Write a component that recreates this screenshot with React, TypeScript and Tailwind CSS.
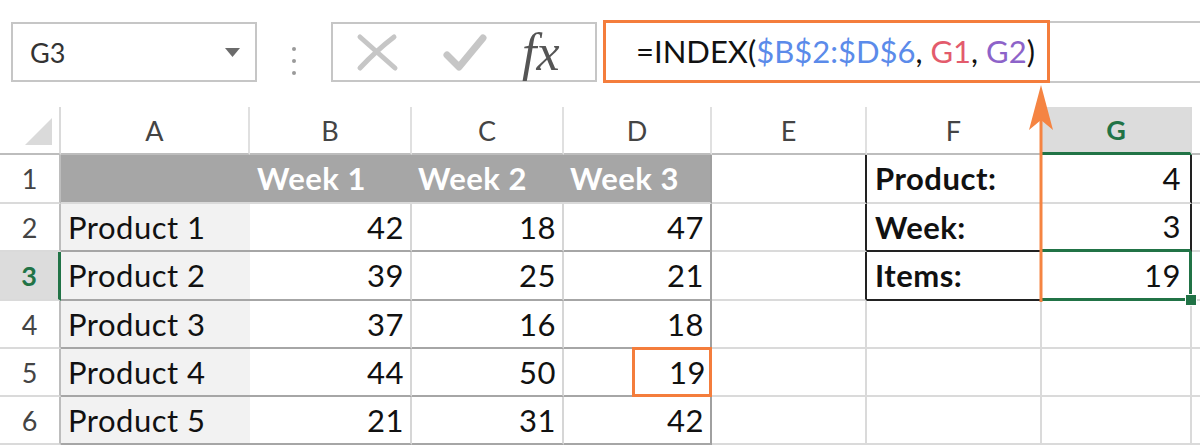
import React from "react"

const sans = "font-['Lato','Liberation_Sans',sans-serif]"

type CellProps = { className?: string; children?: React.ReactNode }

// one sheet cell; borders are drawn on right and bottom only
const Cell = ({ className = "", children }: CellProps) => (
  <div className={"relative flex min-w-0 items-center " + className}>{children}</div>
)

const products = [
  { name: "Product 1", b: "42", c: "18", d: "47" },
  { name: "Product 2", b: "39", c: "25", d: "21" },
  { name: "Product 3", b: "37", c: "16", d: "18" },
  { name: "Product 4", b: "44", c: "50", d: "19" },
  { name: "Product 5", b: "21", c: "31", d: "42" },
]

const lookup: Record<number, { label: string; value: string }> = {
  2: { label: "Week:", value: "3" },
  3: { label: "Items:", value: "19" },
}

const RowHeader = ({ n }: { n: number }) =>
  n === 3 ? (
    <Cell className="justify-center border-r-[3px] border-b-2 border-r-[#217346] border-b-[#dadada] bg-[#dcdcdc] text-[27px] font-bold tracking-normal text-[#217346]">
      3
    </Cell>
  ) : (
    <Cell className="justify-center border-r-2 border-b-2 border-r-[#bdbdbd] border-b-[#dadada] text-[27px] tracking-normal text-[#444]">
      {n}
    </Cell>
  )

export default function App() {
  return (
    <div className={"relative h-[448px] w-[1200px] overflow-hidden bg-white text-[#111] " + sans}>
      {/* formula bar */}
      <div className="flex h-[107px] items-start pt-[20px]">
        <div className="ml-[11px] mt-[2px] flex h-[60px] w-[246px] items-center justify-between border-2 border-[#c6c6c6] pl-[17px] pr-[15px]">
          <span className="text-[27px] leading-none text-[#333]">G3</span>
          <svg width="15" height="9" viewBox="0 0 15 9">
            <path d="M0 0h15L7.5 9z" fill="#6b6b6b" />
          </svg>
        </div>
        <div className="flex w-[74px] flex-col items-center gap-[8px] pt-[27px]">
          <span className="h-[4px] w-[4px] rounded-full bg-[#9a9a9a]" />
          <span className="h-[4px] w-[4px] rounded-full bg-[#9a9a9a]" />
          <span className="h-[4px] w-[4px] rounded-full bg-[#9a9a9a]" />
        </div>
        <div className="mt-[2px] flex h-[60px] w-[266px] items-center border-2 border-[#c6c6c6] pl-[22px]">
          <svg width="44" height="40" viewBox="0 0 44 40">
            <path d="M5 5 Q22 20 40 36 M39 5 Q22 18 5 36" stroke="#c6c6c6" strokeWidth="5" strokeLinecap="round" fill="none" />
          </svg>
          <svg className="ml-[43px]" width="46" height="40" viewBox="0 0 46 40">
            <path d="M5 23 L17 35 L41 6" stroke="#c6c6c6" strokeWidth="7" strokeLinecap="round" strokeLinejoin="round" fill="none" />
          </svg>
          <span className="ml-[34px] mt-[2px] font-['Liberation_Serif',serif] text-[52px] italic leading-none text-[#555]">fx</span>
        </div>
        <div className="ml-[6px] flex h-[63px] w-[447px] items-center border-[3px] border-[#f47d3c] pl-[30px] text-[31px] leading-none">
          <span>=INDEX(</span>
          <span className="text-[#5b8bea]">$B$2:$D$6</span>
          <span>,&nbsp;</span>
          <span className="text-[#e35b6c]">G1</span>
          <span>,&nbsp;</span>
          <span className="text-[#8d63c9]">G2</span>
          <span>)</span>
        </div>
        <div className="mt-[1px] h-[62px] flex-1 border-y-2 border-[#c8c8c8]" />
      </div>

      {/* sheet */}
      <div className="grid grid-cols-[61px_189px_162px_152px_148px_155px_175px_150px_1fr] grid-rows-[48px_49px_48px_49px_48px_48px_48px] text-[31px] leading-none tracking-[0.5px]">
        {/* column letters */}
        <Cell className="items-end justify-end border-r-2 border-b-2 border-r-[#dadada] border-b-[#bdbdbd] pr-[7px] pb-[8px]">
          <svg width="27" height="27" viewBox="0 0 27 27">
            <path d="M27 0V27H0z" fill="#dadada" />
          </svg>
        </Cell>
        {["A", "B", "C", "D", "E", "F"].map((l) => (
          <Cell key={l} className="justify-center border-r-2 border-b-2 border-r-[#e0e0e0] border-b-[#bdbdbd] text-[27px] tracking-normal text-[#444]">
            {l}
          </Cell>
        ))}
        <Cell className="justify-center border-r-2 border-b-[3px] border-r-[#dadada] border-b-[#217346] bg-[#dcdcdc] text-[27px] font-bold tracking-normal text-[#217346]">
          G
        </Cell>
        <Cell className="border-b-2 border-b-[#bdbdbd]" />

        {/* row 1 */}
        <RowHeader n={1} />
        <Cell className="border-b-2 border-b-[#dadada] bg-[#a6a6a6]" />
        <Cell className="border-b-2 border-b-[#dadada] bg-[#a6a6a6] pl-[7px] font-bold text-white">Week 1</Cell>
        <Cell className="border-b-2 border-b-[#dadada] bg-[#a6a6a6] pl-[6px] font-bold text-white">Week 2</Cell>
        <Cell className="border-r-2 border-b-2 border-r-[#a0a0a0] border-b-[#dadada] bg-[#a6a6a6] pl-[6px] font-bold text-white">
          Week 3
        </Cell>
        <Cell className="border-r-2 border-b-2 border-r-[#222] border-b-[#dadada]" />
        <Cell className="border-r-2 border-b-2 border-r-[#dadada] border-b-[#dadada] pl-[8px] font-bold">Product:</Cell>
        <Cell className="justify-end border-r-2 border-b-2 border-r-[#222] border-b-[#dadada] pr-[9px]">4</Cell>
        <Cell className="border-b-2 border-b-[#dadada]" />

        {/* rows 2-6 */}
        {products.map((p, i) => {
          const n = i + 2
          const extra = lookup[n]
          return (
            <React.Fragment key={n}>
              <RowHeader n={n} />
              <Cell className="border-b-2 border-b-[#a6a6a6] bg-[#f2f2f2] pl-[7px]">{p.name}</Cell>
              <Cell className="justify-end border-r-2 border-b-2 border-r-[#d6d6d6] border-b-[#a6a6a6] pr-[6px]">{p.b}</Cell>
              <Cell className="justify-end border-r-2 border-b-2 border-r-[#d6d6d6] border-b-[#a6a6a6] pr-[6px]">{p.c}</Cell>
              {n === 5 ? (
                <Cell className="justify-end border-r-2 border-b-2 border-r-[#a0a0a0] border-b-[#a6a6a6]">
                  <div className="absolute right-[-2px] top-[-2px] z-10 flex h-[50px] w-[80px] items-center justify-end border-[3px] border-[#f47d3c] pr-[3px]">
                    {p.d}
                  </div>
                </Cell>
              ) : (
                <Cell className="justify-end border-r-2 border-b-2 border-r-[#a0a0a0] border-b-[#a6a6a6] pr-[6px]">{p.d}</Cell>
              )}
              {extra ? (
                <>
                  <Cell className="border-r-2 border-b-2 border-r-[#222] border-b-[#dadada]" />
                  <Cell className="border-r-2 border-b-2 border-r-[#dadada] border-b-[#222] pl-[8px] font-bold">{extra.label}</Cell>
                  {n === 2 ? (
                    <Cell className="justify-end border-r-2 border-b-[3px] border-r-[#222] border-b-[#217346] pr-[9px]">{extra.value}</Cell>
                  ) : (
                    <Cell className="justify-end border-r-[3px] border-b-[3px] border-r-[#217346] border-b-[#217346] pr-[8px]">
                      {extra.value}
                    </Cell>
                  )}
                  <Cell className="border-b-2 border-b-[#dadada]" />
                </>
              ) : (
                <>
                  <Cell className="border-r-2 border-b-2 border-r-[#dadada] border-b-[#dadada]" />
                  <Cell className="border-r-2 border-b-2 border-r-[#dadada] border-b-[#dadada]" />
                  <Cell className="border-r-2 border-b-2 border-r-[#dadada] border-b-[#dadada]" />
                  <Cell className="border-b-2 border-b-[#dadada]" />
                </>
              )}
            </React.Fragment>
          )
        })}
      </div>

      {/* fill handle of the selected cell */}
      <div className="absolute left-[1185px] top-[294px] z-20 h-[12px] w-[12px] border border-white bg-[#217346]" />

      {/* annotation arrow from G3 up to the formula */}
      <svg className="absolute left-[1028px] top-[83px] z-20" width="26" height="219" viewBox="0 0 26 219">
        <path d="M13 30V219" stroke="#f58442" strokeWidth="3" />
        <path d="M13 2L25 47L13 37L1 47z" fill="#f58442" />
      </svg>
    </div>
  )
}
